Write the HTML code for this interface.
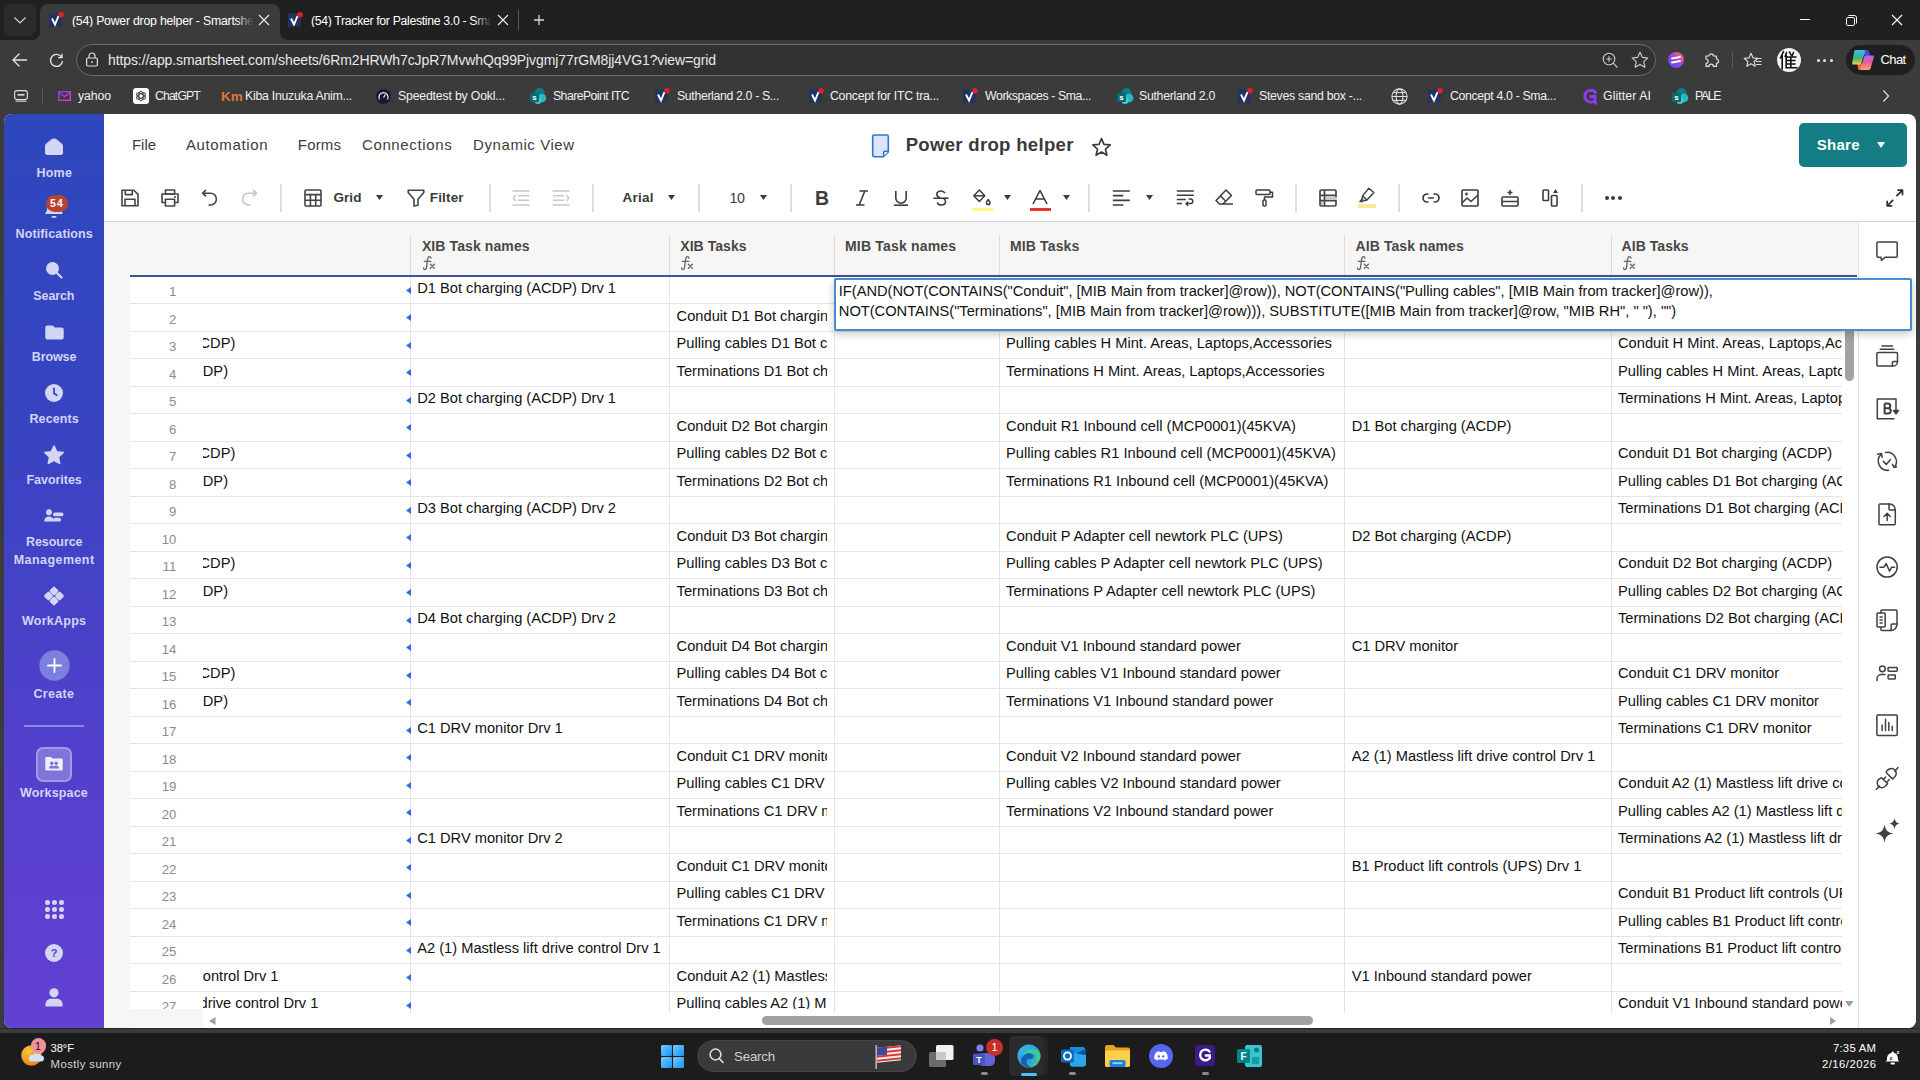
<!DOCTYPE html>
<html><head><meta charset="utf-8"><style>*{box-sizing:border-box;margin:0;padding:0}
html,body{width:1920px;height:1080px;overflow:hidden;background:#3b3b3b;font-family:"Liberation Sans",sans-serif;position:relative}
.a{position:absolute}
.t{position:absolute;line-height:1;white-space:pre}
svg.a{overflow:visible}
</style></head><body>
<div class="a" style="left:0px;top:0px;width:1920px;height:40px;background:#202020"></div>
<div class="a" style="left:4px;top:4px;width:32px;height:32px;background:#2b2b2b;border-radius:8px"></div>
<svg class="a" style="left:12px;top:12px;" width="16" height="16" viewBox="0 0 16 16"><polyline points="2.5,5.5 8,11 13.5,5.5" fill="none" stroke="#d6d6d6" stroke-width="1.2"/></svg>
<div class="a" style="left:40px;top:4px;width:240px;height:37px;background:#3b3b3b;border-radius:8px 8px 0 0"></div>
<svg class="a" style="left:32px;top:32px;" width="8" height="8" viewBox="0 0 8 8"><path d="M8 0V8H0A8 8 0 0 0 8 0Z" fill="#3b3b3b"/></svg>
<svg class="a" style="left:280px;top:32px;" width="8" height="8" viewBox="0 0 8 8"><path d="M0 0V8H8A8 8 0 0 1 0 0Z" fill="#3b3b3b"/></svg>
<svg class="a" style="left:49px;top:12px;" width="15" height="16" viewBox="0 0 15 16"><path d="M0 1.5h11.5l1 0v13.5l-6 -1.2 -6.5 1.7z" fill="#1e3563"/><path d="M3 6.5l3 6 3.5-8.5" fill="none" stroke="#fff" stroke-width="1.9"/><circle cx="12" cy="2.8" r="2.8" fill="#e0202a"/></svg>
<div class="t" style="left:72.00px;top:14.89px;font-size:12.3px;color:#fff;letter-spacing:-0.231px;width:184px;overflow:hidden;">(54) Power drop helper - Smartsheet</div>
<div class="a" style="left:236px;top:8px;width:22px;height:28px;background:linear-gradient(90deg,rgba(59,59,59,0),#3b3b3b 80%)"></div>
<svg class="a" style="left:259.0px;top:15.0px;" width="10" height="10" viewBox="0 0 10 10"><path d="M0 0L10 10M10 0L0 10" stroke="#e8e8e8" stroke-width="1.2"/></svg>
<svg class="a" style="left:288px;top:12px;" width="15" height="16" viewBox="0 0 15 16"><path d="M0 1.5h11.5l1 0v13.5l-6 -1.2 -6.5 1.7z" fill="#1e3563"/><path d="M3 6.5l3 6 3.5-8.5" fill="none" stroke="#fff" stroke-width="1.9"/><circle cx="12" cy="2.8" r="2.8" fill="#e0202a"/></svg>
<div class="t" style="left:311.00px;top:14.89px;font-size:12.3px;color:#fff;letter-spacing:-0.339px;width:184px;overflow:hidden;">(54) Tracker for Palestine 3.0 - Smartsheet</div>
<div class="a" style="left:474px;top:8px;width:22px;height:28px;background:linear-gradient(90deg,rgba(32,32,32,0),#202020 80%)"></div>
<svg class="a" style="left:498.0px;top:15.0px;" width="10" height="10" viewBox="0 0 10 10"><path d="M0 0L10 10M10 0L0 10" stroke="#e8e8e8" stroke-width="1.2"/></svg>
<div class="a" style="left:518px;top:10px;width:1px;height:20px;background:#585858"></div>
<svg class="a" style="left:534px;top:15px;" width="10" height="10" viewBox="0 0 10 10"><path d="M5 0V10M0 5H10" stroke="#d8d8d8" stroke-width="1.3"/></svg>
<div class="a" style="left:1800px;top:19px;width:10px;height:1px;background:#fff"></div>
<svg class="a" style="left:1846px;top:15px;" width="11" height="11" viewBox="0 0 11 11"><rect x="0.5" y="2.5" width="8" height="8" rx="1.3" fill="none" stroke="#fff" stroke-width="1"/><path d="M2.5 0.5h6a2 2 0 0 1 2 2v6" fill="none" stroke="#fff" stroke-width="1"/></svg>
<svg class="a" style="left:1892.0px;top:15.0px;" width="10" height="10" viewBox="0 0 10 10"><path d="M0 0L10 10M10 0L0 10" stroke="#fff" stroke-width="1.1"/></svg>
<svg class="a" style="left:12px;top:52px;" width="16" height="16" viewBox="0 0 16 16"><path d="M15 8H1.5M7.5 1.5L1 8l6.5 6.5" fill="none" stroke="#e6e6e6" stroke-width="1.3"/></svg>
<svg class="a" style="left:49px;top:53px;" width="15" height="15" viewBox="0 0 15 15"><path d="M12.6 4.2A6 6 0 1 0 13.5 8" fill="none" stroke="#e6e6e6" stroke-width="1.3"/><path d="M13 0.8v3.8H9.2" fill="none" stroke="#e6e6e6" stroke-width="1.3"/></svg>
<div class="a" style="left:76px;top:44px;width:1580px;height:32px;background:#323232;border:1px solid #6a6a6a;border-radius:16px"></div>
<svg class="a" style="left:86px;top:52px;" width="12" height="15" viewBox="0 0 12 15"><path d="M3 6V4a3 3 0 0 1 6 0v2" fill="none" stroke="#e0e0e0" stroke-width="1.2"/><rect x="0.6" y="6" width="10.8" height="8" rx="1.5" fill="none" stroke="#e0e0e0" stroke-width="1.2"/><rect x="5.2" y="9.3" width="1.6" height="1.6" fill="#e0e0e0"/></svg>
<div class="t" style="left:108.00px;top:53.05px;font-size:14px;color:#e8e8e8;letter-spacing:-0.100px;">https://app.smartsheet.com/sheets/6Rm2HRWh7cJpR7MvwhQq99Pjvgmj77rGM8jj4VG1?view=grid</div>
<svg class="a" style="left:1602px;top:52px;" width="17" height="17" viewBox="0 0 17 17"><circle cx="7" cy="7" r="5.8" fill="none" stroke="#cfcfcf" stroke-width="1.1"/><path d="M11.2 11.2L15.5 15.5M7 4.2v5.6M4.2 7h5.6" stroke="#cfcfcf" stroke-width="1.1"/></svg>
<svg class="a" style="left:1630px;top:50px;" width="20" height="20" viewBox="0 0 20 20"><polygon points="10.00,2.20 12.29,7.34 17.89,7.94 13.71,11.71 14.88,17.21 10.00,14.40 5.12,17.21 6.29,11.71 2.11,7.94 7.71,7.34" fill="none" stroke="#cfcfcf" stroke-width="1.1" stroke-linejoin="round"/></svg>
<svg class="a" style="left:1668px;top:52px;" width="16" height="16" viewBox="0 0 16 16"><defs><linearGradient id="eg" x1="1" y1="0" x2="0" y2="1"><stop offset="0" stop-color="#ff7a52"/><stop offset="0.5" stop-color="#a040e0"/><stop offset="1" stop-color="#3a5cf0"/></linearGradient></defs><circle cx="8" cy="8" r="8" fill="url(#eg)"/><path d="M4 6.5l8-1.5M4 10.5l8-1.5" stroke="#fff" stroke-width="1.8" stroke-linecap="round"/></svg>
<svg class="a" style="left:1703px;top:51px;" width="18" height="18" viewBox="0 0 18 18"><path d="M3 5h3a2.2 2.2 0 1 1 4.4 0h3v3a2.2 2.2 0 1 1 0 4.4v3h-3a2.2 2.2 0 1 0 -4.4 0H3v-3a2.2 2.2 0 1 0 0 -4.4z" fill="none" stroke="#e0e0e0" stroke-width="1.2" stroke-linejoin="round"/></svg>
<div class="a" style="left:1732px;top:52px;width:1px;height:16px;background:#5a5a5a"></div>
<svg class="a" style="left:1743px;top:51px;" width="20" height="18" viewBox="0 0 20 18"><polygon points="8.00,2.30 9.94,6.83 14.85,7.28 11.14,10.52 12.23,15.32 8.00,12.80 3.77,15.32 4.86,10.52 1.15,7.28 6.06,6.83" fill="none" stroke="#e0e0e0" stroke-width="1.1" stroke-linejoin="round"/><path d="M13 7.5h5.5M13 10.5h5.5M13 13.5h5.5" stroke="#e0e0e0" stroke-width="1.1"/></svg>
<svg class="a" style="left:1777px;top:48px;" width="24" height="24" viewBox="0 0 24 24"><circle cx="12" cy="12" r="12" fill="#f4f4f4"/><g fill="none" stroke="#111" stroke-width="1.6" stroke-linecap="round"><path d="M6.5 3.5L3.5 10M5.2 7.5V21"/><path d="M9.5 4.5L8.2 8.5M9.2 7.5V20M9.2 9H19M9.2 12.5H18M9.2 16H18M9.2 19.8H20M13.8 9V19.8M12.5 4L14 7M16.5 4.5L15.2 7.5"/></g></svg>
<div class="a" style="left:1816.5px;top:58.5px;width:3px;height:3px;background:#e6e6e6;border-radius:50%"></div>
<div class="a" style="left:1823.0px;top:58.5px;width:3px;height:3px;background:#e6e6e6;border-radius:50%"></div>
<div class="a" style="left:1829.5px;top:58.5px;width:3px;height:3px;background:#e6e6e6;border-radius:50%"></div>
<div class="a" style="left:1846px;top:45px;width:69px;height:30px;background:#1f1f1f;border-radius:15px"></div>
<svg class="a" style="left:1852px;top:50px;" width="22" height="20" viewBox="0 0 22 20"><defs><linearGradient id="cg1" x1="0" y1="0" x2="0" y2="1"><stop offset="0" stop-color="#35c1f1"/><stop offset="0.55" stop-color="#3fb079"/><stop offset="1" stop-color="#f2d43a"/></linearGradient><linearGradient id="cg2" x1="0" y1="0" x2="0" y2="1"><stop offset="0" stop-color="#b95ff2"/><stop offset="0.5" stop-color="#ee5c96"/><stop offset="1" stop-color="#fca66a"/></linearGradient></defs><path d="M11 0H15C16 0 16.7 .6 17 1.5L18.2 5.8H12.5Z" fill="#3a4fdc"/><path d="M5.5 13.5H10L11.2 20H7.5C6.7 20 6 19.3 5.8 18.5Z" fill="#ef6a3a"/><path d="M4 0H12C13 0 13.4 .8 13.1 1.8L9.4 13C9.1 13.9 8.4 14.5 7.5 14.5H1.2C.4 14.5 -.1 13.7 .2 12.9L2.2 1.6C2.5 .6 3 0 4 0Z" fill="url(#cg1)"/><path d="M14.2 5.6H20.8C21.7 5.6 22.1 6.3 21.9 7.1L18.6 18.3C18.3 19.3 17.6 20 16.6 20H9.6C8.8 20 8.4 19.2 8.6 18.4L12 7.2C12.3 6.2 13 5.6 14.2 5.6Z" fill="url(#cg2)"/></svg>
<div class="t" style="left:1880.50px;top:53.20px;font-size:13px;color:#fff;letter-spacing:-0.617px;">Chat</div>
<svg class="a" style="left:14px;top:90px;" width="14" height="12" viewBox="0 0 14 12"><rect x="0.6" y="0.6" width="12.8" height="9" rx="2.5" fill="none" stroke="#e0e0e0" stroke-width="1.1"/><path d="M3.5 4.8h7" stroke="#e0e0e0" stroke-width="1.6"/><path d="M1.5 11.2h11" stroke="#e0e0e0" stroke-width="1"/></svg>
<div class="a" style="left:42px;top:88px;width:1px;height:16px;background:#5a5a5a"></div>
<svg class="a" style="left:58px;top:91px;" width="13" height="10" viewBox="0 0 13 10"><defs><linearGradient id="mg" x1="0" y1="0" x2="1" y2="1"><stop offset="0" stop-color="#6a4bff"/><stop offset="1" stop-color="#ff2ad0"/></linearGradient></defs><rect x="0.7" y="0.7" width="11.6" height="8.6" fill="none" stroke="url(#mg)" stroke-width="1.4"/><path d="M0.7 1.5L6.5 5.5L12.3 1.5" fill="none" stroke="url(#mg)" stroke-width="1.4"/></svg>
<div class="t" style="left:78.00px;top:90.29px;font-size:12.3px;color:#f0f0f0;letter-spacing:-0.103px;">yahoo</div>
<div class="a" style="left:133px;top:88px;width:16px;height:16px;background:#fff;border-radius:3px"></div>
<svg class="a" style="left:135px;top:90px;" width="12" height="12" viewBox="0 0 12 12"><ellipse cx="6" cy="6" rx="2.2" ry="4.8" transform="rotate(0 6 6)" fill="none" stroke="#3a3a3a" stroke-width="1"/><ellipse cx="6" cy="6" rx="2.2" ry="4.8" transform="rotate(60 6 6)" fill="none" stroke="#3a3a3a" stroke-width="1"/><ellipse cx="6" cy="6" rx="2.2" ry="4.8" transform="rotate(120 6 6)" fill="none" stroke="#3a3a3a" stroke-width="1"/></svg>
<div class="t" style="left:155.00px;top:90.29px;font-size:12.3px;color:#f0f0f0;letter-spacing:-0.895px;">ChatGPT</div>
<div class="t" style="left:221.00px;top:90.27px;font-size:13.5px;color:#e2733a;font-weight:700;font-family:"Liberation Serif",serif;font-style:italic;letter-spacing:-2px;">Km</div>
<div class="t" style="left:245.00px;top:90.29px;font-size:12.3px;color:#f0f0f0;letter-spacing:-0.255px;">Kiba Inuzuka Anim...</div>
<svg class="a" style="left:376px;top:89px;" width="15" height="15" viewBox="0 0 15 15"><circle cx="7.5" cy="7.5" r="7.5" fill="#141a2e"/><path d="M3.5 10.5A4.6 4.6 0 1 1 11.5 10.5" fill="none" stroke="#e8e8e8" stroke-width="1.2"/><path d="M7.5 8.5L9.5 5.5" stroke="#e8e8e8" stroke-width="1.3"/></svg>
<div class="t" style="left:398.00px;top:90.29px;font-size:12.3px;color:#f0f0f0;letter-spacing:-0.187px;">Speedtest by Ookl...</div>
<svg class="a" style="left:530px;top:88px;" width="17" height="16" viewBox="0 0 17 16"><circle cx="9.5" cy="5" r="5" fill="#0e7c86"/><circle cx="12" cy="10" r="4.3" fill="#2ab7c4"/><circle cx="8" cy="12.5" r="3.5" fill="#43c9d2"/><rect x="0" y="5" width="9" height="9" rx="1.2" fill="#036c70"/><text x="4.5" y="12.3" text-anchor="middle" font-family="Liberation Sans" font-weight="700" font-size="8" fill="#fff">s</text></svg>
<div class="t" style="left:553.00px;top:90.29px;font-size:12.3px;color:#f0f0f0;letter-spacing:-0.577px;">SharePoint ITC</div>
<svg class="a" style="left:655px;top:88px;" width="15" height="16" viewBox="0 0 15 16"><path d="M0 1.5h11.5l1 0v13.5l-6 -1.2 -6.5 1.7z" fill="#1e3563"/><path d="M3 6.5l3 6 3.5-8.5" fill="none" stroke="#fff" stroke-width="1.9"/><circle cx="12" cy="2.8" r="2.8" fill="#e0202a"/></svg>
<div class="t" style="left:677.00px;top:90.29px;font-size:12.3px;color:#f0f0f0;letter-spacing:-0.351px;">Sutherland 2.0 - S...</div>
<svg class="a" style="left:809px;top:88px;" width="15" height="16" viewBox="0 0 15 16"><path d="M0 1.5h11.5l1 0v13.5l-6 -1.2 -6.5 1.7z" fill="#1e3563"/><path d="M3 6.5l3 6 3.5-8.5" fill="none" stroke="#fff" stroke-width="1.9"/><circle cx="12" cy="2.8" r="2.8" fill="#e0202a"/></svg>
<div class="t" style="left:830.00px;top:90.29px;font-size:12.3px;color:#f0f0f0;letter-spacing:-0.264px;">Concept for ITC tra...</div>
<svg class="a" style="left:963px;top:88px;" width="15" height="16" viewBox="0 0 15 16"><path d="M0 1.5h11.5l1 0v13.5l-6 -1.2 -6.5 1.7z" fill="#1e3563"/><path d="M3 6.5l3 6 3.5-8.5" fill="none" stroke="#fff" stroke-width="1.9"/><circle cx="12" cy="2.8" r="2.8" fill="#e0202a"/></svg>
<div class="t" style="left:985.00px;top:90.29px;font-size:12.3px;color:#f0f0f0;letter-spacing:-0.415px;">Workspaces - Sma...</div>
<svg class="a" style="left:1117px;top:88px;" width="17" height="16" viewBox="0 0 17 16"><circle cx="9.5" cy="5" r="5" fill="#0e7c86"/><circle cx="12" cy="10" r="4.3" fill="#2ab7c4"/><circle cx="8" cy="12.5" r="3.5" fill="#43c9d2"/><rect x="0" y="5" width="9" height="9" rx="1.2" fill="#036c70"/><text x="4.5" y="12.3" text-anchor="middle" font-family="Liberation Sans" font-weight="700" font-size="8" fill="#fff">s</text></svg>
<div class="t" style="left:1139.00px;top:90.29px;font-size:12.3px;color:#f0f0f0;letter-spacing:-0.286px;">Sutherland 2.0</div>
<svg class="a" style="left:1238px;top:88px;" width="15" height="16" viewBox="0 0 15 16"><path d="M0 1.5h11.5l1 0v13.5l-6 -1.2 -6.5 1.7z" fill="#1e3563"/><path d="M3 6.5l3 6 3.5-8.5" fill="none" stroke="#fff" stroke-width="1.9"/><circle cx="12" cy="2.8" r="2.8" fill="#e0202a"/></svg>
<div class="t" style="left:1259.00px;top:90.29px;font-size:12.3px;color:#f0f0f0;letter-spacing:-0.284px;">Steves sand box -...</div>
<svg class="a" style="left:1391px;top:88px;" width="17" height="17" viewBox="0 0 17 17"><circle cx="8.5" cy="8.5" r="7.6" fill="none" stroke="#e0e0e0" stroke-width="1.1"/><ellipse cx="8.5" cy="8.5" rx="3.4" ry="7.6" fill="none" stroke="#e0e0e0" stroke-width="1.1"/><path d="M1 8.5h15M2.2 4.6h12.6M2.2 12.4h12.6" stroke="#e0e0e0" stroke-width="1"/></svg>
<svg class="a" style="left:1428px;top:88px;" width="15" height="16" viewBox="0 0 15 16"><path d="M0 1.5h11.5l1 0v13.5l-6 -1.2 -6.5 1.7z" fill="#1e3563"/><path d="M3 6.5l3 6 3.5-8.5" fill="none" stroke="#fff" stroke-width="1.9"/><circle cx="12" cy="2.8" r="2.8" fill="#e0202a"/></svg>
<div class="t" style="left:1450.00px;top:90.29px;font-size:12.3px;color:#f0f0f0;letter-spacing:-0.339px;">Concept 4.0 - Sma...</div>
<svg class="a" style="left:1582px;top:88px;" width="16" height="17" viewBox="0 0 16 17"><path d="M13.5 4.5A6 6 0 1 0 13 12.5L13 8.5H8.5" fill="none" stroke="#8e3bf0" stroke-width="3" stroke-linecap="round"/><circle cx="13.5" cy="15" r="1.8" fill="#8e3bf0"/></svg>
<div class="t" style="left:1603.00px;top:90.29px;font-size:12.3px;color:#f0f0f0;letter-spacing:0.084px;">Glitter AI</div>
<svg class="a" style="left:1672px;top:88px;" width="17" height="16" viewBox="0 0 17 16"><circle cx="9.5" cy="5" r="5" fill="#0e7c86"/><circle cx="12" cy="10" r="4.3" fill="#2ab7c4"/><circle cx="8" cy="12.5" r="3.5" fill="#43c9d2"/><rect x="0" y="5" width="9" height="9" rx="1.2" fill="#036c70"/><text x="4.5" y="12.3" text-anchor="middle" font-family="Liberation Sans" font-weight="700" font-size="8" fill="#fff">s</text></svg>
<div class="t" style="left:1695.00px;top:90.29px;font-size:12.3px;color:#f0f0f0;letter-spacing:-1.387px;">PALE</div>
<svg class="a" style="left:1882px;top:90px;" width="8" height="12" viewBox="0 0 8 12"><path d="M1.5 0.5L6.5 6L1.5 11.5" fill="none" stroke="#e0e0e0" stroke-width="1.2"/></svg>
<div class="a" style="left:4px;top:114px;width:1912px;height:914px;background:#fff;border-radius:8px"></div>
<div class="a" style="left:4px;top:114px;width:100px;height:914px;background:linear-gradient(180deg,#2e47bd 0%,#3844c2 35%,#4a41c9 58%,#5a40cf 82%,#6240d2 100%);border-radius:8px 0 0 8px"></div>
<svg class="a" style="left:44px;top:137px;" width="20" height="19" viewBox="0 0 20 19"><path d="M7.2 2.6C8.2 1.9 9 1.6 10 1.6S11.8 1.9 12.8 2.6L18 6.8C18.7 7.4 19 8.2 19 9.2V15.6C19 17.2 18.2 18 16.6 18H3.4C1.8 18 1 17.2 1 15.6V9.2C1 8.2 1.3 7.4 2 6.8Z" fill="#d3d5f5"/></svg>
<div class="t" style="left:36.40px;top:167.42px;font-size:12.5px;color:#d2d4f4;font-weight:700;letter-spacing:0.241px;">Home</div>
<svg class="a" style="left:45px;top:198px;" width="18" height="21" viewBox="0 0 18 21"><path d="M2 12.5c0-5 3-8.5 7-8.5s7 3.5 7 8.5l1.5 2.2c.4.6 0 1.3-.7 1.3H1.2c-.7 0-1.1-.7-.7-1.3z" fill="#d3d5f5"/><rect x="6.5" y="18" width="5" height="1.8" rx=".9" fill="#d3d5f5"/></svg>
<div class="a" style="left:46px;top:195px;width:22px;height:16.5px;background:#b9432e;border-radius:9px"></div>
<div class="t" style="left:50.00px;top:198.31px;font-size:10.5px;color:#fff;font-weight:700;letter-spacing:1.156px;">54</div>
<div class="t" style="left:15.50px;top:228.12px;font-size:12.5px;color:#d2d4f4;font-weight:700;letter-spacing:0.131px;">Notifications</div>
<svg class="a" style="left:45px;top:261px;" width="18" height="18" viewBox="0 0 18 18"><circle cx="7.5" cy="7.5" r="6.5" fill="#d3d5f5"/><path d="M12 12l4.5 4.5" stroke="#d3d5f5" stroke-width="2.2" stroke-linecap="round"/></svg>
<div class="t" style="left:33.30px;top:290.02px;font-size:12.5px;color:#d2d4f4;font-weight:700;letter-spacing:-0.101px;">Search</div>
<svg class="a" style="left:44.5px;top:324.5px;" width="19" height="15" viewBox="0 0 19 15"><path d="M2.5 0.5h4.5c.8 0 1.3.3 1.8.9l1 1.1h6.7c1.4 0 2.2.8 2.2 2.2v7.6c0 1.4-.8 2.2-2.2 2.2H2.5C1.1 14.5.3 13.7.3 12.3V2.7C.3 1.3 1.1.5 2.5.5z" fill="#d3d5f5"/></svg>
<div class="t" style="left:31.75px;top:350.92px;font-size:12.5px;color:#d2d4f4;font-weight:700;letter-spacing:-0.109px;">Browse</div>
<svg class="a" style="left:45px;top:383.5px;" width="18" height="18" viewBox="0 0 18 18"><circle cx="9" cy="9" r="9" fill="#d3d5f5"/><path d="M9 4.5V9.3L11.8 11.2" fill="none" stroke="#3a42c4" stroke-width="1.8" stroke-linecap="round"/></svg>
<div class="t" style="left:29.50px;top:413.42px;font-size:12.5px;color:#d2d4f4;font-weight:700;letter-spacing:0.087px;">Recents</div>
<svg class="a" style="left:44px;top:445px;" width="20" height="20" viewBox="0 0 20 20"><polygon points="10.00,1.00 12.70,6.88 19.13,7.63 14.37,12.02 15.64,18.37 10.00,15.20 4.36,18.37 5.63,12.02 0.87,7.63 7.30,6.88" fill="#d3d5f5" stroke="#d3d5f5" stroke-width="1.6" stroke-linejoin="round"/></svg>
<div class="t" style="left:26.50px;top:474.17px;font-size:12.5px;color:#d2d4f4;font-weight:700;letter-spacing:-0.038px;">Favorites</div>
<svg class="a" style="left:44px;top:509px;" width="20" height="14" viewBox="0 0 20 14"><circle cx="5" cy="3.2" r="3" fill="#d3d5f5"/><path d="M0.2 12.5c0-3.2 2-5 4.8-5s4.8 1.8 4.8 5z" fill="#d3d5f5"/><rect x="9" y="3.5" width="10.5" height="3.8" rx="1.9" fill="#d3d5f5"/><rect x="9" y="8.8" width="8" height="3.8" rx="1.9" fill="#d3d5f5"/></svg>
<div class="t" style="left:26.00px;top:536.42px;font-size:12.5px;color:#d2d4f4;font-weight:700;letter-spacing:-0.061px;">Resource</div>
<div class="t" style="left:13.75px;top:554.22px;font-size:12.5px;color:#d2d4f4;font-weight:700;letter-spacing:0.434px;">Management</div>
<svg class="a" style="left:44px;top:587px;" width="20" height="18" viewBox="0 0 20 18"><g fill="#d3d5f5"><rect x="6.5" y="0.5" width="7" height="7" rx="1.6" transform="rotate(45 10 4)"/><rect x="1" y="5.5" width="7" height="7" rx="1.6" transform="rotate(45 4.5 9)"/><rect x="12" y="5.5" width="7" height="7" rx="1.6" transform="rotate(45 15.5 9)"/><rect x="6.5" y="10.5" width="7" height="7" rx="1.6" transform="rotate(45 10 14)"/></g></svg>
<div class="t" style="left:22.00px;top:614.92px;font-size:12.5px;color:#d2d4f4;font-weight:700;letter-spacing:0.246px;">WorkApps</div>
<svg class="a" style="left:38.5px;top:650px;" width="31" height="31" viewBox="0 0 31 31"><circle cx="15.5" cy="15.5" r="15.2" fill="#7d7fdc"/><path d="M15.5 9v13M9 15.5h13" stroke="#fff" stroke-width="1.8" stroke-linecap="round"/></svg>
<div class="t" style="left:33.40px;top:688.22px;font-size:12.5px;color:#d2d4f4;font-weight:700;letter-spacing:0.346px;">Create</div>
<div class="a" style="left:24px;top:725px;width:60px;height:2px;background:#8b89df"></div>
<div class="a" style="left:36px;top:746.5px;width:36px;height:35px;background:#7e74da;border:2px solid #a39ae6;border-radius:7px"></div>
<svg class="a" style="left:45px;top:756px;" width="18" height="15" viewBox="0 0 18 15"><path d="M1.5 1h4.5l1.5 1.5h9c.8 0 1.2.4 1.2 1.2v9.6c0 .8-.4 1.2-1.2 1.2H1.5c-.8 0-1.2-.4-1.2-1.2V2.2C.3 1.4.7 1 1.5 1z" fill="#eeeefc"/><circle cx="6.8" cy="7.3" r="1.7" fill="#7e74da"/><circle cx="11.2" cy="7.3" r="1.7" fill="#7e74da"/><path d="M4 12.5c0-2 1.3-3 2.8-3s2.8 1 2.8 3zM8.4 12.5c0-2 1.3-3 2.8-3s2.8 1 2.8 3z" fill="#7e74da"/></svg>
<div class="t" style="left:19.90px;top:786.72px;font-size:12.5px;color:#d2d4f4;font-weight:700;letter-spacing:0.181px;">Workspace</div>
<div class="a" style="left:45px;top:900px;width:4.6px;height:4.6px;background:#d3d5f5;border-radius:50%"></div>
<div class="a" style="left:52px;top:900px;width:4.6px;height:4.6px;background:#d3d5f5;border-radius:50%"></div>
<div class="a" style="left:59px;top:900px;width:4.6px;height:4.6px;background:#d3d5f5;border-radius:50%"></div>
<div class="a" style="left:45px;top:907px;width:4.6px;height:4.6px;background:#d3d5f5;border-radius:50%"></div>
<div class="a" style="left:52px;top:907px;width:4.6px;height:4.6px;background:#d3d5f5;border-radius:50%"></div>
<div class="a" style="left:59px;top:907px;width:4.6px;height:4.6px;background:#d3d5f5;border-radius:50%"></div>
<div class="a" style="left:45px;top:914px;width:4.6px;height:4.6px;background:#d3d5f5;border-radius:50%"></div>
<div class="a" style="left:52px;top:914px;width:4.6px;height:4.6px;background:#d3d5f5;border-radius:50%"></div>
<div class="a" style="left:59px;top:914px;width:4.6px;height:4.6px;background:#d3d5f5;border-radius:50%"></div>
<svg class="a" style="left:45px;top:944px;" width="18" height="18" viewBox="0 0 18 18"><circle cx="9" cy="9" r="9" fill="#d3d5f5"/><text x="9" y="13" text-anchor="middle" font-family="Liberation Sans" font-weight="700" font-size="11" fill="#5a3ecd">?</text></svg>
<svg class="a" style="left:45px;top:988px;" width="18" height="19" viewBox="0 0 18 19"><circle cx="9" cy="4.8" r="4.6" fill="#d3d5f5"/><path d="M0.5 18.5v-2.2c0-3.2 2.4-5.6 5.4-5.6h6.2c3 0 5.4 2.4 5.4 5.6v2.2z" fill="#d3d5f5"/></svg>
<div class="t" style="left:132.00px;top:136.90px;font-size:15px;color:#3d3d3d;letter-spacing:-0.043px;">File</div>
<div class="t" style="left:185.90px;top:136.90px;font-size:15px;color:#3d3d3d;letter-spacing:0.651px;">Automation</div>
<div class="t" style="left:297.80px;top:136.90px;font-size:15px;color:#3d3d3d;letter-spacing:0.180px;">Forms</div>
<div class="t" style="left:361.90px;top:136.90px;font-size:15px;color:#3d3d3d;letter-spacing:0.655px;">Connections</div>
<div class="t" style="left:473.10px;top:136.90px;font-size:15px;color:#3d3d3d;letter-spacing:0.570px;">Dynamic View</div>
<svg class="a" style="left:872px;top:134px;" width="19" height="24" viewBox="0 0 19 24"><path d="M2.2 1h12.6c.9 0 1.5.6 1.5 1.5v15.5l-4.8 4.8H2.2c-.9 0-1.5-.6-1.5-1.5V2.5C.7 1.6 1.3 1 2.2 1z" fill="#dbe5fb" stroke="#2f76cf" stroke-width="1.6" stroke-linejoin="round"/><path d="M16.3 17.2h-3.6c-.6 0-1 .4-1 1v4.4" fill="#fff" stroke="#2f76cf" stroke-width="1.6" stroke-linejoin="round"/></svg>
<div class="t" style="left:905.70px;top:135.96px;font-size:18.6px;color:#3a3a3a;font-weight:700;letter-spacing:0.279px;">Power drop helper</div>
<svg class="a" style="left:1091px;top:137px;" width="21" height="20" viewBox="0 0 21 20"><polygon points="10.50,1.60 12.97,7.40 19.25,7.96 14.49,12.10 15.91,18.24 10.50,15.00 5.09,18.24 6.51,12.10 1.75,7.96 8.03,7.40" fill="none" stroke="#3d3d3d" stroke-width="1.7" stroke-linejoin="round"/></svg>
<div class="a" style="left:1799px;top:123px;width:108px;height:44px;background:#137d83;border-radius:5px"></div>
<div class="t" style="left:1816.80px;top:137.30px;font-size:15px;color:#fff;font-weight:700;letter-spacing:0.259px;">Share</div>
<svg class="a" style="left:1877px;top:142px;" width="8" height="6" viewBox="0 0 8 6"><path d="M0 0H8L4 6z" fill="#fff"/></svg>
<div class="a" style="left:104px;top:221px;width:1812px;height:1px;background:#d3d3d3"></div>
<svg class="a" style="left:121px;top:189px;" width="18" height="18" viewBox="0 0 18 18"><g fill="none" stroke="#444" stroke-width="1.6" stroke-linejoin="round"><path d="M1 1.2h11.8l4.2 4.2V16.8H1z"/><path d="M4.3 1.2V5.6h7V1.2"/><path d="M4 16.8V10.3h10v6.5"/></g></svg>
<svg class="a" style="left:161px;top:189px;" width="18" height="18" viewBox="0 0 18 18"><g fill="none" stroke="#444" stroke-width="1.6" stroke-linejoin="round"><rect x="4.4" y="1" width="9.2" height="4"/><path d="M4.3 13.5H1V5h16v8.5h-3.3"/><rect x="4.4" y="10.2" width="9.2" height="6.8"/></g></svg>
<div class="a" style="left:173.5px;top:196px;width:2px;height:2px;background:#444;border-radius:1px"></div>
<svg class="a" style="left:201px;top:189px;" width="18" height="18" viewBox="0 0 18 18"><g fill="none" stroke="#444" stroke-width="1.6" stroke-linejoin="round"><path d="M1.8 4.2H9.5a5.9 5.9 0 0 1 0 11.8H7.5"/><path d="M5 1L1.6 4.2L5 7.4"/></g></svg>
<svg class="a" style="left:240px;top:189px;" width="18" height="18" viewBox="0 0 18 18"><g fill="none" stroke="#c6c6c6" stroke-width="1.6" stroke-linejoin="round"><path d="M16.2 4.2H8.5a5.9 5.9 0 0 0 0 11.8H10.5"/><path d="M13 1L16.4 4.2L13 7.4"/></g></svg>
<div class="a" style="left:280px;top:184px;width:2px;height:28px;background:#dedede"></div>
<svg class="a" style="left:304px;top:189px;" width="18" height="18" viewBox="0 0 18 18"><g fill="none" stroke="#444" stroke-width="1.6" stroke-linejoin="round"><rect x="1" y="1" width="16" height="16" rx="1"/><path d="M1 5.6H17M1 11.2H17M6.4 5.6V17M11.7 5.6V17"/></g></svg>
<div class="t" style="left:333.50px;top:190.97px;font-size:13.5px;color:#3a3a3a;font-weight:700;letter-spacing:0.059px;">Grid</div>
<svg class="a" style="left:375.5px;top:195px;" width="7" height="5" viewBox="0 0 7 5"><path d="M0 0H7L3.5 5z" fill="#3d3d3d"/></svg>
<svg class="a" style="left:407px;top:189px;" width="18" height="18" viewBox="0 0 18 18"><g fill="none" stroke="#444" stroke-width="1.6" stroke-linejoin="round"><path d="M1.2 1.2H16.8V3.5L11 10.2V16.2L7 17V10.2L1.2 3.5Z"/></g></svg>
<div class="t" style="left:429.80px;top:190.97px;font-size:13.5px;color:#3a3a3a;font-weight:700;letter-spacing:0.164px;">Filter</div>
<div class="a" style="left:489px;top:184px;width:2px;height:28px;background:#dedede"></div>
<svg class="a" style="left:512px;top:190px;" width="18" height="16" viewBox="0 0 18 16"><g fill="none" stroke="#c8c8c8" stroke-width="1.5" stroke-linejoin="round"><path d="M0.5 1H17.5M6 5.8H17M6 10.2H17M0.5 15H17.5"/><path d="M3.8 5L1.2 8L3.8 11"/></g></svg>
<svg class="a" style="left:552px;top:190px;" width="18" height="16" viewBox="0 0 18 16"><g fill="none" stroke="#c8c8c8" stroke-width="1.5" stroke-linejoin="round"><path d="M0.5 1H17.5M1 5.8H12M1 10.2H12M0.5 15H17.5"/><path d="M14.2 5L16.8 8L14.2 11"/></g></svg>
<div class="a" style="left:592px;top:184px;width:2px;height:28px;background:#dedede"></div>
<div class="t" style="left:622.50px;top:191.27px;font-size:13.5px;color:#3a3a3a;font-weight:700;letter-spacing:0.257px;">Arial</div>
<svg class="a" style="left:667.5px;top:195px;" width="7" height="5" viewBox="0 0 7 5"><path d="M0 0H7L3.5 5z" fill="#3d3d3d"/></svg>
<div class="a" style="left:698px;top:184px;width:2px;height:28px;background:#dedede"></div>
<div class="t" style="left:729.50px;top:190.90px;font-size:14.3px;color:#3a3a3a;letter-spacing:-0.453px;">10</div>
<svg class="a" style="left:759.5px;top:195px;" width="7" height="5" viewBox="0 0 7 5"><path d="M0 0H7L3.5 5z" fill="#3d3d3d"/></svg>
<div class="a" style="left:790px;top:184px;width:2px;height:28px;background:#dedede"></div>
<div class="t" style="left:815.00px;top:188.99px;font-size:19.5px;color:#3d3d3d;font-weight:700;letter-spacing:-0.594px;">B</div>
<svg class="a" style="left:855px;top:190px;" width="14" height="16" viewBox="0 0 14 16"><path d="M4.5 1H13M1 15H9.5M9.8 1L4.2 15" fill="none" stroke="#3d3d3d" stroke-width="1.6"/></svg>
<svg class="a" style="left:893px;top:190px;" width="16" height="16" viewBox="0 0 16 16"><g fill="none" stroke="#3d3d3d" stroke-width="1.6" stroke-linejoin="round"><path d="M2.8 1V8a5.2 5.2 0 0 0 10.4 0V1"/><path d="M1 15.2H15"/></g></svg>
<svg class="a" style="left:933px;top:190px;" width="16" height="16" viewBox="0 0 16 16"><g fill="none" stroke="#3d3d3d" stroke-width="1.6" stroke-linejoin="round"><path d="M12 3.2C11.2 1.7 9.8 1 8 1 5.6 1 3.8 2.4 3.8 4.3c0 1.6 1 2.6 3.2 3.4"/><path d="M4.2 12.6C5 14.2 6.4 15 8.2 15c2.5 0 4.3-1.4 4.3-3.5 0-1.3-.6-2.3-1.8-3"/><path d="M0.5 8.2H15.5"/></g></svg>
<svg class="a" style="left:973px;top:189px;" width="18" height="16" viewBox="0 0 18 16"><g fill="none" stroke="#3d3d3d" stroke-width="1.5" stroke-linejoin="round"><path d="M6.3 1L11.8 6.8L6.3 12.5L0.8 6.8Z"/><path d="M0.8 6.8H11.8"/><path d="M15.2 10.5c1.2 1.6 1.8 2.4 1.8 3.2a1.8 1.8 0 0 1-3.6 0c0-.8.6-1.6 1.8-3.2z"/></g></svg>
<div class="a" style="left:972px;top:208px;width:21px;height:3px;background:#fbf985"></div>
<svg class="a" style="left:1004.3px;top:195px;" width="7" height="5" viewBox="0 0 7 5"><path d="M0 0H7L3.5 5z" fill="#3d3d3d"/></svg>
<svg class="a" style="left:1032px;top:189px;" width="16" height="16" viewBox="0 0 16 16"><g fill="none" stroke="#3d3d3d" stroke-width="1.6" stroke-linejoin="round"><path d="M1 15L8 1.5L15 15M3.6 10H12.4"/></g></svg>
<div class="a" style="left:1030px;top:208px;width:21px;height:3px;background:#e5392c"></div>
<svg class="a" style="left:1062.5px;top:195px;" width="7" height="5" viewBox="0 0 7 5"><path d="M0 0H7L3.5 5z" fill="#3d3d3d"/></svg>
<div class="a" style="left:1088px;top:184px;width:2px;height:28px;background:#dedede"></div>
<svg class="a" style="left:1112px;top:190px;" width="18" height="16" viewBox="0 0 18 16"><g fill="none" stroke="#3d3d3d" stroke-width="1.7" stroke-linejoin="round"><path d="M0.8 1H17.8M0.8 5.7H11.3M0.8 10.3H17.8M0.8 15H11.3"/></g></svg>
<svg class="a" style="left:1145.5px;top:195px;" width="7" height="5" viewBox="0 0 7 5"><path d="M0 0H7L3.5 5z" fill="#3d3d3d"/></svg>
<svg class="a" style="left:1176px;top:190px;" width="18" height="17" viewBox="0 0 18 17"><g fill="none" stroke="#3d3d3d" stroke-width="1.5" stroke-linejoin="round"><path d="M0.8 1H17.8M0.8 5.2H17.8M0.8 9.4H9.8M0.8 13.6H6"/><path d="M10.5 13.6H14.5a2.3 2.3 0 0 0 0-4.6H12.5"/><path d="M12.2 11.8L10 13.6L12.2 15.8"/></g></svg>
<svg class="a" style="left:1215px;top:189px;" width="19" height="17" viewBox="0 0 19 17"><g fill="none" stroke="#3d3d3d" stroke-width="1.5" stroke-linejoin="round"><path d="M11 1L16.5 6.5L8 15H4.5L1 11.5Z"/><path d="M5.2 6.8L10.7 12.3"/><path d="M8 15H18"/></g></svg>
<svg class="a" style="left:1255px;top:189px;" width="19" height="18" viewBox="0 0 19 18"><g fill="none" stroke="#3d3d3d" stroke-width="1.5" stroke-linejoin="round"><rect x="1" y="1" width="14" height="4.6" rx="1"/><path d="M15 3.3H17.5V8H9.5V11"/><rect x="8" y="11" width="3" height="6" rx="1"/></g></svg>
<div class="a" style="left:1295px;top:184px;width:2px;height:28px;background:#dedede"></div>
<svg class="a" style="left:1319px;top:189px;" width="18" height="18" viewBox="0 0 18 18"><g fill="none" stroke="#444" stroke-width="1.7" stroke-linejoin="round"><rect x="1" y="1" width="16" height="16" rx="1.2"/><path d="M1 6.3H17M1 11.7H17M5.5 1V17"/></g></svg>
<div class="a" style="left:1326px;top:196.5px;width:10.5px;height:3.8px;background:#c8c8c8"></div>
<div class="a" style="left:1320.5px;top:201.5px;width:3.5px;height:3.8px;background:#c8c8c8"></div>
<svg class="a" style="left:1359px;top:187px;" width="16" height="16" viewBox="0 0 16 16"><g fill="none" stroke="#3d3d3d" stroke-width="1.4" stroke-linejoin="round"><path d="M9.8 1.2L14.8 5.5L8 13L4.5 13.8L3 12.3L3.6 8.9Z"/><path d="M3.6 8.9L8 13"/><path d="M3 12.3L1 14.5H4"/></g></svg>
<div class="a" style="left:1358px;top:204px;width:18px;height:4px;background:#fae7a0"></div>
<div class="a" style="left:1398px;top:184px;width:2px;height:28px;background:#dedede"></div>
<svg class="a" style="left:1422px;top:193px;" width="18" height="10" viewBox="0 0 18 10"><g fill="none" stroke="#3d3d3d" stroke-width="1.7" stroke-linejoin="round"><path d="M6.5 1H5a4 4 0 0 0 0 8h1.5M11.5 1H13a4 4 0 0 1 0 8h-1.5M6 5H12"/></g></svg>
<svg class="a" style="left:1461px;top:189px;" width="18" height="18" viewBox="0 0 18 18"><g fill="none" stroke="#3d3d3d" stroke-width="1.6" stroke-linejoin="round"><rect x="1" y="1" width="16" height="16" rx="1"/><path d="M1 14L6 9L10 12.5L17 6"/><circle cx="5.5" cy="5" r=".6"/></g></svg>
<svg class="a" style="left:1501px;top:189px;" width="18" height="18" viewBox="0 0 18 18"><g fill="none" stroke="#3d3d3d" stroke-width="1.6" stroke-linejoin="round"><rect x="1" y="8" width="16" height="9" rx="1"/><path d="M1 12.5H17M9 1V6M6.5 3.5H11.5"/></g></svg>
<svg class="a" style="left:1542px;top:189px;" width="16" height="18" viewBox="0 0 16 18"><g fill="none" stroke="#3d3d3d" stroke-width="1.6" stroke-linejoin="round"><rect x="1" y="1" width="5.5" height="10.5" rx=".8"/><rect x="9.5" y="6.5" width="5.5" height="10.5" rx=".8"/></g></svg>
<svg class="a" style="left:1553px;top:189px;" width="5" height="4" viewBox="0 0 5 4"><path d="M0 4H5L2.5 0z" fill="#3d3d3d"/></svg>
<div class="a" style="left:1580.5px;top:184px;width:2px;height:28px;background:#dedede"></div>
<div class="a" style="left:1604.5px;top:196px;width:4px;height:4px;background:#3d3d3d;border-radius:50%"></div>
<div class="a" style="left:1611.3px;top:196px;width:4px;height:4px;background:#3d3d3d;border-radius:50%"></div>
<div class="a" style="left:1618px;top:196px;width:4px;height:4px;background:#3d3d3d;border-radius:50%"></div>
<svg class="a" style="left:1886px;top:189px;" width="18" height="18" viewBox="0 0 18 18"><g fill="none" stroke="#2d2d2d" stroke-width="1.7" stroke-linejoin="round"><path d="M10.5 7.2L16.5 1.2M11.5 1.2H16.5V6.2M7.2 10.8L1.2 16.8M1.2 11.8V16.8H6.2"/></g></svg>
<div class="a" style="left:104px;top:222px;width:1754px;height:806px;background:#f7f6f4"></div>
<div class="a" style="left:130px;top:277px;width:1728px;height:751px;background:#fff"></div>
<div class="a" style="left:130px;top:1009px;width:73px;height:18px;background:#f7f6f4"></div>
<div class="a" style="left:1858px;top:222px;width:58px;height:806px;background:#fff;border-left:1px solid #e2e2e2;border-radius:0 0 8px 0"></div>
<div class="a" style="left:410px;top:235px;width:1px;height:40px;background:#dedede"></div>
<div class="a" style="left:669px;top:235px;width:1px;height:40px;background:#dedede"></div>
<div class="a" style="left:834px;top:235px;width:1px;height:40px;background:#dedede"></div>
<div class="a" style="left:999px;top:235px;width:1px;height:40px;background:#dedede"></div>
<div class="a" style="left:1344px;top:235px;width:1px;height:40px;background:#dedede"></div>
<div class="a" style="left:1611px;top:235px;width:1px;height:40px;background:#dedede"></div>
<div class="t" style="left:421.90px;top:239.35px;font-size:14px;color:#474747;font-weight:700;letter-spacing:0.103px;">XIB Task names</div>
<svg class="a" style="left:418.0px;top:252px;" width="24" height="22" viewBox="0 0 24 22"><g fill="none" stroke="#676767" stroke-width="1.35" stroke-linecap="round"><path d="M13 6.2C12.6 4.6 11.2 4.2 10.3 5.2 9.8 5.8 9.6 7 9.4 8.5L8.6 15C8.4 16.8 7.6 17.6 6.8 17.6 6.1 17.6 5.6 16.8 5.6 16"/><path d="M6.3 9.4H12.9"/><path d="M12.4 12.3L16.3 16.3M16.4 12.3L12.3 16.3"/></g></svg>
<div class="t" style="left:680.30px;top:239.35px;font-size:14px;color:#474747;font-weight:700;letter-spacing:0.045px;">XIB Tasks</div>
<svg class="a" style="left:676.4px;top:252px;" width="24" height="22" viewBox="0 0 24 22"><g fill="none" stroke="#676767" stroke-width="1.35" stroke-linecap="round"><path d="M13 6.2C12.6 4.6 11.2 4.2 10.3 5.2 9.8 5.8 9.6 7 9.4 8.5L8.6 15C8.4 16.8 7.6 17.6 6.8 17.6 6.1 17.6 5.6 16.8 5.6 16"/><path d="M6.3 9.4H12.9"/><path d="M12.4 12.3L16.3 16.3M16.4 12.3L12.3 16.3"/></g></svg>
<div class="t" style="left:845.00px;top:239.35px;font-size:14px;color:#474747;font-weight:700;letter-spacing:0.188px;">MIB Task names</div>
<div class="t" style="left:1010.00px;top:239.35px;font-size:14px;color:#474747;font-weight:700;letter-spacing:0.131px;">MIB Tasks</div>
<div class="t" style="left:1355.60px;top:239.35px;font-size:14px;color:#474747;font-weight:700;letter-spacing:0.077px;">AIB Task names</div>
<svg class="a" style="left:1351.7px;top:252px;" width="24" height="22" viewBox="0 0 24 22"><g fill="none" stroke="#676767" stroke-width="1.35" stroke-linecap="round"><path d="M13 6.2C12.6 4.6 11.2 4.2 10.3 5.2 9.8 5.8 9.6 7 9.4 8.5L8.6 15C8.4 16.8 7.6 17.6 6.8 17.6 6.1 17.6 5.6 16.8 5.6 16"/><path d="M6.3 9.4H12.9"/><path d="M12.4 12.3L16.3 16.3M16.4 12.3L12.3 16.3"/></g></svg>
<div class="t" style="left:1621.60px;top:239.35px;font-size:14px;color:#474747;font-weight:700;letter-spacing:0.048px;">AIB Tasks</div>
<svg class="a" style="left:1617.7px;top:252px;" width="24" height="22" viewBox="0 0 24 22"><g fill="none" stroke="#676767" stroke-width="1.35" stroke-linecap="round"><path d="M13 6.2C12.6 4.6 11.2 4.2 10.3 5.2 9.8 5.8 9.6 7 9.4 8.5L8.6 15C8.4 16.8 7.6 17.6 6.8 17.6 6.1 17.6 5.6 16.8 5.6 16"/><path d="M6.3 9.4H12.9"/><path d="M12.4 12.3L16.3 16.3M16.4 12.3L12.3 16.3"/></g></svg>
<div class="a" style="left:130px;top:275px;width:1727px;height:2px;background:#3e5394"></div>
<div class="a" style="left:130px;top:303px;width:1712px;height:1px;background:#e4e4e4"></div>
<div class="a" style="left:130px;top:331px;width:1712px;height:1px;background:#e4e4e4"></div>
<div class="a" style="left:130px;top:358px;width:1712px;height:1px;background:#e4e4e4"></div>
<div class="a" style="left:130px;top:386px;width:1712px;height:1px;background:#e4e4e4"></div>
<div class="a" style="left:130px;top:413px;width:1712px;height:1px;background:#e4e4e4"></div>
<div class="a" style="left:130px;top:441px;width:1712px;height:1px;background:#e4e4e4"></div>
<div class="a" style="left:130px;top:468px;width:1712px;height:1px;background:#e4e4e4"></div>
<div class="a" style="left:130px;top:496px;width:1712px;height:1px;background:#e4e4e4"></div>
<div class="a" style="left:130px;top:523px;width:1712px;height:1px;background:#e4e4e4"></div>
<div class="a" style="left:130px;top:551px;width:1712px;height:1px;background:#e4e4e4"></div>
<div class="a" style="left:130px;top:578px;width:1712px;height:1px;background:#e4e4e4"></div>
<div class="a" style="left:130px;top:606px;width:1712px;height:1px;background:#e4e4e4"></div>
<div class="a" style="left:130px;top:633px;width:1712px;height:1px;background:#e4e4e4"></div>
<div class="a" style="left:130px;top:661px;width:1712px;height:1px;background:#e4e4e4"></div>
<div class="a" style="left:130px;top:688px;width:1712px;height:1px;background:#e4e4e4"></div>
<div class="a" style="left:130px;top:716px;width:1712px;height:1px;background:#e4e4e4"></div>
<div class="a" style="left:130px;top:743px;width:1712px;height:1px;background:#e4e4e4"></div>
<div class="a" style="left:130px;top:771px;width:1712px;height:1px;background:#e4e4e4"></div>
<div class="a" style="left:130px;top:798px;width:1712px;height:1px;background:#e4e4e4"></div>
<div class="a" style="left:130px;top:826px;width:1712px;height:1px;background:#e4e4e4"></div>
<div class="a" style="left:130px;top:853px;width:1712px;height:1px;background:#e4e4e4"></div>
<div class="a" style="left:130px;top:881px;width:1712px;height:1px;background:#e4e4e4"></div>
<div class="a" style="left:130px;top:908px;width:1712px;height:1px;background:#e4e4e4"></div>
<div class="a" style="left:130px;top:936px;width:1712px;height:1px;background:#e4e4e4"></div>
<div class="a" style="left:130px;top:963px;width:1712px;height:1px;background:#e4e4e4"></div>
<div class="a" style="left:130px;top:991px;width:1712px;height:1px;background:#e4e4e4"></div>
<div class="a" style="left:410px;top:277px;width:1px;height:736px;background:#e4e4e4"></div>
<div class="a" style="left:669px;top:277px;width:1px;height:736px;background:#e4e4e4"></div>
<div class="a" style="left:834px;top:277px;width:1px;height:736px;background:#e4e4e4"></div>
<div class="a" style="left:999px;top:277px;width:1px;height:736px;background:#e4e4e4"></div>
<div class="a" style="left:1344px;top:277px;width:1px;height:736px;background:#e4e4e4"></div>
<div class="a" style="left:1611px;top:277px;width:1px;height:736px;background:#e4e4e4"></div>
<div class="a" style="left:130px;top:277px;width:73px;height:732px;overflow:hidden">
<div class="t" style="left:6.3px;top:8.03px;width:40px;text-align:right;font-size:13.2px;color:#8c8c8c">1</div>
<div class="t" style="left:6.3px;top:35.53px;width:40px;text-align:right;font-size:13.2px;color:#8c8c8c">2</div>
<div class="t" style="left:6.3px;top:63.03px;width:40px;text-align:right;font-size:13.2px;color:#8c8c8c">3</div>
<div class="t" style="left:6.3px;top:90.53px;width:40px;text-align:right;font-size:13.2px;color:#8c8c8c">4</div>
<div class="t" style="left:6.3px;top:118.03px;width:40px;text-align:right;font-size:13.2px;color:#8c8c8c">5</div>
<div class="t" style="left:6.3px;top:145.53px;width:40px;text-align:right;font-size:13.2px;color:#8c8c8c">6</div>
<div class="t" style="left:6.3px;top:173.03px;width:40px;text-align:right;font-size:13.2px;color:#8c8c8c">7</div>
<div class="t" style="left:6.3px;top:200.53px;width:40px;text-align:right;font-size:13.2px;color:#8c8c8c">8</div>
<div class="t" style="left:6.3px;top:228.03px;width:40px;text-align:right;font-size:13.2px;color:#8c8c8c">9</div>
<div class="t" style="left:6.3px;top:255.53px;width:40px;text-align:right;font-size:13.2px;color:#8c8c8c">10</div>
<div class="t" style="left:6.3px;top:283.03px;width:40px;text-align:right;font-size:13.2px;color:#8c8c8c">11</div>
<div class="t" style="left:6.3px;top:310.53px;width:40px;text-align:right;font-size:13.2px;color:#8c8c8c">12</div>
<div class="t" style="left:6.3px;top:338.03px;width:40px;text-align:right;font-size:13.2px;color:#8c8c8c">13</div>
<div class="t" style="left:6.3px;top:365.53px;width:40px;text-align:right;font-size:13.2px;color:#8c8c8c">14</div>
<div class="t" style="left:6.3px;top:393.03px;width:40px;text-align:right;font-size:13.2px;color:#8c8c8c">15</div>
<div class="t" style="left:6.3px;top:420.53px;width:40px;text-align:right;font-size:13.2px;color:#8c8c8c">16</div>
<div class="t" style="left:6.3px;top:448.03px;width:40px;text-align:right;font-size:13.2px;color:#8c8c8c">17</div>
<div class="t" style="left:6.3px;top:475.53px;width:40px;text-align:right;font-size:13.2px;color:#8c8c8c">18</div>
<div class="t" style="left:6.3px;top:503.03px;width:40px;text-align:right;font-size:13.2px;color:#8c8c8c">19</div>
<div class="t" style="left:6.3px;top:530.53px;width:40px;text-align:right;font-size:13.2px;color:#8c8c8c">20</div>
<div class="t" style="left:6.3px;top:558.03px;width:40px;text-align:right;font-size:13.2px;color:#8c8c8c">21</div>
<div class="t" style="left:6.3px;top:585.53px;width:40px;text-align:right;font-size:13.2px;color:#8c8c8c">22</div>
<div class="t" style="left:6.3px;top:613.03px;width:40px;text-align:right;font-size:13.2px;color:#8c8c8c">23</div>
<div class="t" style="left:6.3px;top:640.53px;width:40px;text-align:right;font-size:13.2px;color:#8c8c8c">24</div>
<div class="t" style="left:6.3px;top:668.03px;width:40px;text-align:right;font-size:13.2px;color:#8c8c8c">25</div>
<div class="t" style="left:6.3px;top:695.53px;width:40px;text-align:right;font-size:13.2px;color:#8c8c8c">26</div>
<div class="t" style="left:6.3px;top:723.03px;width:40px;text-align:right;font-size:13.2px;color:#8c8c8c">27</div>
</div>
<svg class="a" style="left:405.5px;top:286.7px;" width="5" height="7" viewBox="0 0 5 7"><path d="M5 0V7L0 3.5z" fill="#2e6be0"/></svg>
<svg class="a" style="left:405.5px;top:314.2px;" width="5" height="7" viewBox="0 0 5 7"><path d="M5 0V7L0 3.5z" fill="#2e6be0"/></svg>
<svg class="a" style="left:405.5px;top:341.7px;" width="5" height="7" viewBox="0 0 5 7"><path d="M5 0V7L0 3.5z" fill="#2e6be0"/></svg>
<svg class="a" style="left:405.5px;top:369.2px;" width="5" height="7" viewBox="0 0 5 7"><path d="M5 0V7L0 3.5z" fill="#2e6be0"/></svg>
<svg class="a" style="left:405.5px;top:396.7px;" width="5" height="7" viewBox="0 0 5 7"><path d="M5 0V7L0 3.5z" fill="#2e6be0"/></svg>
<svg class="a" style="left:405.5px;top:424.2px;" width="5" height="7" viewBox="0 0 5 7"><path d="M5 0V7L0 3.5z" fill="#2e6be0"/></svg>
<svg class="a" style="left:405.5px;top:451.7px;" width="5" height="7" viewBox="0 0 5 7"><path d="M5 0V7L0 3.5z" fill="#2e6be0"/></svg>
<svg class="a" style="left:405.5px;top:479.2px;" width="5" height="7" viewBox="0 0 5 7"><path d="M5 0V7L0 3.5z" fill="#2e6be0"/></svg>
<svg class="a" style="left:405.5px;top:506.7px;" width="5" height="7" viewBox="0 0 5 7"><path d="M5 0V7L0 3.5z" fill="#2e6be0"/></svg>
<svg class="a" style="left:405.5px;top:534.2px;" width="5" height="7" viewBox="0 0 5 7"><path d="M5 0V7L0 3.5z" fill="#2e6be0"/></svg>
<svg class="a" style="left:405.5px;top:561.7px;" width="5" height="7" viewBox="0 0 5 7"><path d="M5 0V7L0 3.5z" fill="#2e6be0"/></svg>
<svg class="a" style="left:405.5px;top:589.2px;" width="5" height="7" viewBox="0 0 5 7"><path d="M5 0V7L0 3.5z" fill="#2e6be0"/></svg>
<svg class="a" style="left:405.5px;top:616.7px;" width="5" height="7" viewBox="0 0 5 7"><path d="M5 0V7L0 3.5z" fill="#2e6be0"/></svg>
<svg class="a" style="left:405.5px;top:644.2px;" width="5" height="7" viewBox="0 0 5 7"><path d="M5 0V7L0 3.5z" fill="#2e6be0"/></svg>
<svg class="a" style="left:405.5px;top:671.7px;" width="5" height="7" viewBox="0 0 5 7"><path d="M5 0V7L0 3.5z" fill="#2e6be0"/></svg>
<svg class="a" style="left:405.5px;top:699.2px;" width="5" height="7" viewBox="0 0 5 7"><path d="M5 0V7L0 3.5z" fill="#2e6be0"/></svg>
<svg class="a" style="left:405.5px;top:726.7px;" width="5" height="7" viewBox="0 0 5 7"><path d="M5 0V7L0 3.5z" fill="#2e6be0"/></svg>
<svg class="a" style="left:405.5px;top:754.2px;" width="5" height="7" viewBox="0 0 5 7"><path d="M5 0V7L0 3.5z" fill="#2e6be0"/></svg>
<svg class="a" style="left:405.5px;top:781.7px;" width="5" height="7" viewBox="0 0 5 7"><path d="M5 0V7L0 3.5z" fill="#2e6be0"/></svg>
<svg class="a" style="left:405.5px;top:809.2px;" width="5" height="7" viewBox="0 0 5 7"><path d="M5 0V7L0 3.5z" fill="#2e6be0"/></svg>
<svg class="a" style="left:405.5px;top:836.7px;" width="5" height="7" viewBox="0 0 5 7"><path d="M5 0V7L0 3.5z" fill="#2e6be0"/></svg>
<svg class="a" style="left:405.5px;top:864.2px;" width="5" height="7" viewBox="0 0 5 7"><path d="M5 0V7L0 3.5z" fill="#2e6be0"/></svg>
<svg class="a" style="left:405.5px;top:891.7px;" width="5" height="7" viewBox="0 0 5 7"><path d="M5 0V7L0 3.5z" fill="#2e6be0"/></svg>
<svg class="a" style="left:405.5px;top:919.2px;" width="5" height="7" viewBox="0 0 5 7"><path d="M5 0V7L0 3.5z" fill="#2e6be0"/></svg>
<svg class="a" style="left:405.5px;top:946.7px;" width="5" height="7" viewBox="0 0 5 7"><path d="M5 0V7L0 3.5z" fill="#2e6be0"/></svg>
<svg class="a" style="left:405.5px;top:974.2px;" width="5" height="7" viewBox="0 0 5 7"><path d="M5 0V7L0 3.5z" fill="#2e6be0"/></svg>
<svg class="a" style="left:405.5px;top:1001.7px;" width="5" height="7" viewBox="0 0 5 7"><path d="M5 0V7L0 3.5z" fill="#2e6be0"/></svg>
<div class="a" style="left:203px;top:277px;width:202px;height:732px;overflow:hidden">
<div class="t" style="left:-221.80px;top:58.58px;font-size:14.67px;color:#111">Pulling cables D1 Bot charging (ACDP)</div>
<div class="t" style="left:-221.80px;top:86.58px;font-size:14.67px;color:#111">Terminations D1 Bot charging (ACDP)</div>
<div class="t" style="left:-221.80px;top:168.58px;font-size:14.67px;color:#111">Pulling cables D2 Bot charging (ACDP)</div>
<div class="t" style="left:-221.80px;top:196.58px;font-size:14.67px;color:#111">Terminations D2 Bot charging (ACDP)</div>
<div class="t" style="left:-221.80px;top:278.58px;font-size:14.67px;color:#111">Pulling cables D3 Bot charging (ACDP)</div>
<div class="t" style="left:-221.80px;top:306.58px;font-size:14.67px;color:#111">Terminations D3 Bot charging (ACDP)</div>
<div class="t" style="left:-221.80px;top:388.58px;font-size:14.67px;color:#111">Pulling cables D4 Bot charging (ACDP)</div>
<div class="t" style="left:-221.80px;top:416.58px;font-size:14.67px;color:#111">Terminations D4 Bot charging (ACDP)</div>
<div class="t" style="left:-221.80px;top:691.58px;font-size:14.67px;color:#111">Conduit A2 (1) Mastless lift drive control Drv 1</div>
<div class="t" style="left:-221.80px;top:718.58px;font-size:14.67px;color:#111">Pulling cables A2 (1) Mastless lift drive control Drv 1</div>
</div>
<div class="a" style="left:411px;top:277px;width:251px;height:732px;overflow:hidden">
<div class="t" style="left:6.20px;top:3.58px;font-size:14.67px;color:#111">D1 Bot charging (ACDP) Drv 1</div>
<div class="t" style="left:6.20px;top:113.58px;font-size:14.67px;color:#111">D2 Bot charging (ACDP) Drv 1</div>
<div class="t" style="left:6.20px;top:223.58px;font-size:14.67px;color:#111">D3 Bot charging (ACDP) Drv 2</div>
<div class="t" style="left:6.20px;top:333.58px;font-size:14.67px;color:#111">D4 Bot charging (ACDP) Drv 2</div>
<div class="t" style="left:6.20px;top:443.58px;font-size:14.67px;color:#111">C1 DRV monitor Drv 1</div>
<div class="t" style="left:6.20px;top:553.58px;font-size:14.67px;color:#111">C1 DRV monitor Drv 2</div>
<div class="t" style="left:6.20px;top:663.58px;font-size:14.67px;color:#111">A2 (1) Mastless lift drive control Drv 1</div>
</div>
<div class="a" style="left:670px;top:277px;width:157px;height:732px;overflow:hidden">
<div class="t" style="left:6.60px;top:31.58px;font-size:14.67px;color:#111">Conduit D1 Bot charging (ACDP)</div>
<div class="t" style="left:6.60px;top:58.58px;font-size:14.67px;color:#111">Pulling cables D1 Bot charging (ACDP)</div>
<div class="t" style="left:6.60px;top:86.58px;font-size:14.67px;color:#111">Terminations D1 Bot charging (ACDP)</div>
<div class="t" style="left:6.60px;top:141.58px;font-size:14.67px;color:#111">Conduit D2 Bot charging (ACDP)</div>
<div class="t" style="left:6.60px;top:168.58px;font-size:14.67px;color:#111">Pulling cables D2 Bot charging (ACDP)</div>
<div class="t" style="left:6.60px;top:196.58px;font-size:14.67px;color:#111">Terminations D2 Bot charging (ACDP)</div>
<div class="t" style="left:6.60px;top:251.58px;font-size:14.67px;color:#111">Conduit D3 Bot charging (ACDP)</div>
<div class="t" style="left:6.60px;top:278.58px;font-size:14.67px;color:#111">Pulling cables D3 Bot charging (ACDP)</div>
<div class="t" style="left:6.60px;top:306.58px;font-size:14.67px;color:#111">Terminations D3 Bot charging (ACDP)</div>
<div class="t" style="left:6.60px;top:361.58px;font-size:14.67px;color:#111">Conduit D4 Bot charging (ACDP)</div>
<div class="t" style="left:6.60px;top:388.58px;font-size:14.67px;color:#111">Pulling cables D4 Bot charging (ACDP)</div>
<div class="t" style="left:6.60px;top:416.58px;font-size:14.67px;color:#111">Terminations D4 Bot charging (ACDP)</div>
<div class="t" style="left:6.60px;top:471.58px;font-size:14.67px;color:#111">Conduit C1 DRV monitor</div>
<div class="t" style="left:6.60px;top:498.58px;font-size:14.67px;color:#111">Pulling cables C1 DRV monitor</div>
<div class="t" style="left:6.60px;top:526.58px;font-size:14.67px;color:#111">Terminations C1 DRV monitor</div>
<div class="t" style="left:6.60px;top:581.58px;font-size:14.67px;color:#111">Conduit C1 DRV monitor</div>
<div class="t" style="left:6.60px;top:608.58px;font-size:14.67px;color:#111">Pulling cables C1 DRV monitor</div>
<div class="t" style="left:6.60px;top:636.58px;font-size:14.67px;color:#111">Terminations C1 DRV monitor</div>
<div class="t" style="left:6.60px;top:691.58px;font-size:14.67px;color:#111">Conduit A2 (1) Mastless lift drive control</div>
<div class="t" style="left:6.60px;top:718.58px;font-size:14.67px;color:#111">Pulling cables A2 (1) Mastless lift drive control</div>
</div>
<div class="a" style="left:1000px;top:277px;width:337px;height:732px;overflow:hidden">
<div class="t" style="left:6.10px;top:58.58px;font-size:14.67px;color:#111">Pulling cables H Mint. Areas, Laptops,Accessories</div>
<div class="t" style="left:6.10px;top:86.58px;font-size:14.67px;color:#111">Terminations H Mint. Areas, Laptops,Accessories</div>
<div class="t" style="left:6.10px;top:141.58px;font-size:14.67px;color:#111">Conduit R1 Inbound cell (MCP0001)(45KVA)</div>
<div class="t" style="left:6.10px;top:168.58px;font-size:14.67px;color:#111">Pulling cables R1 Inbound cell (MCP0001)(45KVA)</div>
<div class="t" style="left:6.10px;top:196.58px;font-size:14.67px;color:#111">Terminations R1 Inbound cell (MCP0001)(45KVA)</div>
<div class="t" style="left:6.10px;top:251.58px;font-size:14.67px;color:#111">Conduit P Adapter cell newtork PLC (UPS)</div>
<div class="t" style="left:6.10px;top:278.58px;font-size:14.67px;color:#111">Pulling cables P Adapter cell newtork PLC (UPS)</div>
<div class="t" style="left:6.10px;top:306.58px;font-size:14.67px;color:#111">Terminations P Adapter cell newtork PLC (UPS)</div>
<div class="t" style="left:6.10px;top:361.58px;font-size:14.67px;color:#111">Conduit V1 Inbound standard power</div>
<div class="t" style="left:6.10px;top:388.58px;font-size:14.67px;color:#111">Pulling cables V1 Inbound standard power</div>
<div class="t" style="left:6.10px;top:416.58px;font-size:14.67px;color:#111">Terminations V1 Inbound standard power</div>
<div class="t" style="left:6.10px;top:471.58px;font-size:14.67px;color:#111">Conduit V2 Inbound standard power</div>
<div class="t" style="left:6.10px;top:498.58px;font-size:14.67px;color:#111">Pulling cables V2 Inbound standard power</div>
<div class="t" style="left:6.10px;top:526.58px;font-size:14.67px;color:#111">Terminations V2 Inbound standard power</div>
</div>
<div class="a" style="left:1345px;top:277px;width:259px;height:732px;overflow:hidden">
<div class="t" style="left:6.70px;top:141.58px;font-size:14.67px;color:#111">D1 Bot charging (ACDP)</div>
<div class="t" style="left:6.70px;top:251.58px;font-size:14.67px;color:#111">D2 Bot charging (ACDP)</div>
<div class="t" style="left:6.70px;top:361.58px;font-size:14.67px;color:#111">C1 DRV monitor</div>
<div class="t" style="left:6.70px;top:471.58px;font-size:14.67px;color:#111">A2 (1) Mastless lift drive control Drv 1</div>
<div class="t" style="left:6.70px;top:581.58px;font-size:14.67px;color:#111">B1 Product lift controls (UPS) Drv 1</div>
<div class="t" style="left:6.70px;top:691.58px;font-size:14.67px;color:#111">V1 Inbound standard power</div>
</div>
<div class="a" style="left:1612px;top:277px;width:230px;height:732px;overflow:hidden">
<div class="t" style="left:6.00px;top:58.58px;font-size:14.67px;color:#111">Conduit H Mint. Areas, Laptops,Accessories</div>
<div class="t" style="left:6.00px;top:86.58px;font-size:14.67px;color:#111">Pulling cables H Mint. Areas, Laptops,Accessories</div>
<div class="t" style="left:6.00px;top:113.58px;font-size:14.67px;color:#111">Terminations H Mint. Areas, Laptops,Accessories</div>
<div class="t" style="left:6.00px;top:168.58px;font-size:14.67px;color:#111">Conduit D1 Bot charging (ACDP)</div>
<div class="t" style="left:6.00px;top:196.58px;font-size:14.67px;color:#111">Pulling cables D1 Bot charging (ACDP)</div>
<div class="t" style="left:6.00px;top:223.58px;font-size:14.67px;color:#111">Terminations D1 Bot charging (ACDP)</div>
<div class="t" style="left:6.00px;top:278.58px;font-size:14.67px;color:#111">Conduit D2 Bot charging (ACDP)</div>
<div class="t" style="left:6.00px;top:306.58px;font-size:14.67px;color:#111">Pulling cables D2 Bot charging (ACDP)</div>
<div class="t" style="left:6.00px;top:333.58px;font-size:14.67px;color:#111">Terminations D2 Bot charging (ACDP)</div>
<div class="t" style="left:6.00px;top:388.58px;font-size:14.67px;color:#111">Conduit C1 DRV monitor</div>
<div class="t" style="left:6.00px;top:416.58px;font-size:14.67px;color:#111">Pulling cables C1 DRV monitor</div>
<div class="t" style="left:6.00px;top:443.58px;font-size:14.67px;color:#111">Terminations C1 DRV monitor</div>
<div class="t" style="left:6.00px;top:498.58px;font-size:14.67px;color:#111">Conduit A2 (1) Mastless lift drive control Drv 1</div>
<div class="t" style="left:6.00px;top:526.58px;font-size:14.67px;color:#111">Pulling cables A2 (1) Mastless lift drive control Drv 1</div>
<div class="t" style="left:6.00px;top:553.58px;font-size:14.67px;color:#111">Terminations A2 (1) Mastless lift drive control Drv 1</div>
<div class="t" style="left:6.00px;top:608.58px;font-size:14.67px;color:#111">Conduit B1 Product lift controls (UPS) Drv 1</div>
<div class="t" style="left:6.00px;top:636.58px;font-size:14.67px;color:#111">Pulling cables B1 Product lift controls (UPS) Drv 1</div>
<div class="t" style="left:6.00px;top:663.58px;font-size:14.67px;color:#111">Terminations B1 Product lift controls (UPS) Drv 1</div>
<div class="t" style="left:6.00px;top:718.58px;font-size:14.67px;color:#111">Conduit V1 Inbound standard power Drv 1</div>
</div>
<div class="a" style="left:1845px;top:280px;width:9px;height:101px;background:#a3a3a3;border-radius:4.5px"></div>
<svg class="a" style="left:1845px;top:1001px;" width="8.5" height="6" viewBox="0 0 8.5 6"><path d="M0 0H8.5L4.25 6z" fill="#a0a0a0"/></svg>
<div class="a" style="left:762px;top:1016px;width:551px;height:8.7px;background:#a1a1a1;border-radius:4.4px"></div>
<svg class="a" style="left:208.5px;top:1017px;" width="6.5" height="8" viewBox="0 0 6.5 8"><path d="M6.5 0V8L0 4z" fill="#a0a0a0"/></svg>
<svg class="a" style="left:1830px;top:1017px;" width="6" height="8" viewBox="0 0 6 8"><path d="M0 0V8L6 4z" fill="#a0a0a0"/></svg>
<div class="a" style="left:834px;top:277.5px;width:1077.5px;height:53.5px;background:#fff;border:2px solid #4b8ad6;border-radius:2px;box-shadow:0 3px 9px rgba(0,0,0,0.22)"></div>
<div class="t" style="left:838.80px;top:283.58px;font-size:14.67px;color:#111;letter-spacing:-0.014px;">IF(AND(NOT(CONTAINS("Conduit", [MIB Main from tracker]@row)), NOT(CONTAINS("Pulling cables", [MIB Main from tracker]@row)),</div>
<div class="t" style="left:838.80px;top:304.28px;font-size:14.67px;color:#111;">NOT(CONTAINS("Terminations", [MIB Main from tracker]@row))), SUBSTITUTE([MIB Main from tracker]@row, "MIB RH", " "), "")</div>
<svg class="a" style="left:1872px;top:234px;" width="32" height="32" viewBox="0 0 32 32"><g fill="none" stroke="#404040" stroke-width="1.5" stroke-linejoin="round" stroke-linecap="round"><path d="M6 8H24.2C24.8 8 25.2 8.4 25.2 9V22.2C25.2 22.8 24.8 23.2 24.2 23.2H13.3L9.5 26.3L9 23.2H6C5.4 23.2 4.9 22.8 4.9 22.2V9C4.9 8.4 5.4 8 6 8Z"/></g></svg>
<svg class="a" style="left:1872px;top:338px;" width="32" height="32" viewBox="0 0 32 32"><g fill="none" stroke="#404040" stroke-width="1.5" stroke-linejoin="round" stroke-linecap="round"><path d="M10 8H20.5M8.2 11.3H21.7"/><path d="M6 14.5H24.5C25.1 14.5 25.5 14.9 25.5 15.5V23.4C25.5 26 23.5 28.1 20.9 28.1H6C5.4 28.1 4.9 27.7 4.9 27.1V15.5C4.9 14.9 5.4 14.5 6 14.5Z"/><path d="M20.4 28.1V24.4C20.4 23.8 20.8 23.4 21.4 23.4H25.5"/></g></svg>
<svg class="a" style="left:1872px;top:392px;" width="32" height="32" viewBox="0 0 32 32"><g fill="none" stroke="#404040" stroke-width="1.5" stroke-linejoin="round" stroke-linecap="round"><path d="M21.9 26.8H5.3V7.1H24V18.5"/><path d="M21.5 18.6L24 21.8L26.5 18.6z" fill="#404040"/></g></svg>
<svg class="a" style="left:1872px;top:392px;" width="32" height="32" viewBox="0 0 32 32"><path d="M12.6 11.6H15.6C17.3 11.6 18.2 12.5 18.2 13.9 18.2 15.3 17.3 16.2 15.6 16.2H12.6M12.6 16.2H16C17.8 16.2 18.8 17.2 18.8 18.8 18.8 20.4 17.8 21.5 16 21.5H12.6V11.6" fill="none" stroke="#404040" stroke-width="2" stroke-linejoin="round"/></svg>
<svg class="a" style="left:1872px;top:445px;" width="32" height="32" viewBox="0 0 32 32"><g fill="none" stroke="#404040" stroke-width="1.5" stroke-linejoin="round" stroke-linecap="round"><path d="M13.6 7.4A9.3 9.3 0 0 1 22.5 22.2"/><path d="M20.5 19.4L22.2 22.6L24.5 21.7"/><path d="M16.6 25.3A9.3 9.3 0 0 1 8.9 9.6"/><path d="M5.6 9.2L9.5 8.6L10.1 12.3"/><path d="M11.3 16.4L14.4 19.4L18.4 14.6"/></g></svg>
<svg class="a" style="left:1872px;top:498px;" width="32" height="32" viewBox="0 0 32 32"><g fill="none" stroke="#404040" stroke-width="1.5" stroke-linejoin="round" stroke-linecap="round"><path d="M8 5.9H17.8C20.8 5.9 23.3 8.7 23.3 12V25.7C23.3 26.3 22.9 26.7 22.3 26.7H8C7.4 26.7 7 26.3 7 25.7V6.9C7 6.3 7.4 5.9 8 5.9Z"/><path d="M17 5.9V11.1C17 11.7 17.4 12.1 18 12.1H23.3"/><path d="M15.2 22.6V15.4M12 18.5L15.2 15.2L18.3 18.5"/></g></svg>
<svg class="a" style="left:1872px;top:551px;" width="32" height="32" viewBox="0 0 32 32"><g fill="none" stroke="#404040" stroke-width="1.5" stroke-linejoin="round" stroke-linecap="round"><circle cx="15.1" cy="16" r="10.1"/><path d="M7.9 16.2H11.8L14.2 12.6L17.6 20.3L19.5 16.2H22.6"/></g></svg>
<svg class="a" style="left:1872px;top:604px;" width="32" height="32" viewBox="0 0 32 32"><g fill="none" stroke="#404040" stroke-width="1.5" stroke-linejoin="round" stroke-linecap="round"><path d="M8.9 9V7.1C8.9 6.5 9.3 6.1 9.9 6.1H24C24.6 6.1 25 6.5 25 7.1V20.3C25 23.7 22.3 26.5 19 26.5H9.9C9.3 26.5 8.9 26.1 8.9 25.5V23.2"/><path d="M19.1 26.5V21.1C19.1 20.5 19.5 20.1 20.1 20.1H25"/><rect x="5" y="9" width="8.2" height="14" rx="1"/><path d="M8 13H10.2M8 16H10.2M8 19H10.2"/></g></svg>
<svg class="a" style="left:1872px;top:657px;" width="32" height="32" viewBox="0 0 32 32"><g fill="none" stroke="#404040" stroke-width="1.5" stroke-linejoin="round" stroke-linecap="round"><circle cx="10.4" cy="11.8" r="2.9"/><path d="M5 23.6V21.7C5 19.3 7 17.6 9.4 17.6H13"/><rect x="16.1" y="10.4" width="9.1" height="3.8" rx=".6"/><rect x="16.1" y="18.1" width="7.2" height="3.8" rx=".6"/></g></svg>
<svg class="a" style="left:1872px;top:709px;" width="32" height="32" viewBox="0 0 32 32"><g fill="none" stroke="#404040" stroke-width="1.5" stroke-linejoin="round" stroke-linecap="round"><rect x="4.9" y="5.9" width="20.3" height="20.5" rx="1"/><path d="M10.1 16V21.5M13.5 10.3V21.5M16.8 13.6V21.5M20.2 17.2V21.5"/></g></svg>
<svg class="a" style="left:1872px;top:762px;" width="32" height="32" viewBox="0 0 32 32"><g fill="none" stroke="#404040" stroke-width="1.5" stroke-linejoin="round" stroke-linecap="round"><path d="M4.3 27.3L7.6 24M22.8 9.2L26 5.5"/><path d="M9.6 15.7L15.6 21.7L13.5 24C11.5 26 8.5 26.3 6.5 24.3 4.6 22.4 4.8 19.3 6.8 17.4Z"/><path d="M11.4 17.4L13.6 15M14.6 20.5L17.3 17.6"/><path d="M14.3 10.7L20.5 16.9L22.6 15C24.7 12.9 24.8 9.8 22.8 7.8 20.8 5.8 17.7 6 15.6 8.1L14.3 9.8"/></g></svg>
<svg class="a" style="left:1872px;top:815px;" width="32" height="32" viewBox="0 0 32 32"><g fill="#404040"><path d="M12.5 9.5C13.5 15.5 15.5 17.5 21.5 18.5 15.5 19.5 13.5 21.5 12.5 27.5 11.5 21.5 9.5 19.5 3.5 18.5 9.5 17.5 11.5 15.5 12.5 9.5Z"/><path d="M22.5 3C23.1 6.5 24.3 7.9 27.8 8.6 24.3 9.3 23.1 10.7 22.5 14.3 21.9 10.7 20.7 9.3 17.2 8.6 20.7 7.9 21.9 6.5 22.5 3Z"/></g></svg>
<div class="a" style="left:0px;top:1033px;width:1920px;height:47px;background:#1c1c1c"></div>
<div class="a" style="left:0px;top:1028px;width:1920px;height:1px;background:#262626"></div>
<svg class="a" style="left:21px;top:1045px;" width="22" height="22" viewBox="0 0 22 22"><defs><radialGradient id="sun" cx="0.35" cy="0.3" r="0.8"><stop offset="0" stop-color="#f9c53a"/><stop offset="1" stop-color="#f07a12"/></radialGradient></defs><circle cx="10.5" cy="10.5" r="10.3" fill="url(#sun)"/></svg>
<svg class="a" style="left:28px;top:1052px;" width="16" height="10" viewBox="0 0 16 10"><path d="M3.5 9.5H13a3 3 0 0 0 0-6 4.2 4.2 0 0 0-7.8-.5A3 3 0 0 0 3.5 9.5z" fill="#cfe3fb"/></svg>
<div class="a" style="left:30.5px;top:1038px;width:15.5px;height:15.5px;background:#f4929c;border-radius:50%"></div>
<div class="t" style="left:35.00px;top:1040.91px;font-size:10.5px;color:#111;letter-spacing:0.156px;">1</div>
<div class="t" style="left:50.60px;top:1043.03px;font-size:11.3px;color:#fff;letter-spacing:-0.146px;">38°F</div>
<div class="t" style="left:50.60px;top:1058.63px;font-size:11.3px;color:#d6d6d6;letter-spacing:0.422px;">Mostly sunny</div>
<svg class="a" style="left:661px;top:1045px;" width="23" height="23" viewBox="0 0 23 23"><defs><linearGradient id="wg" x1="0" y1="0" x2="1" y2="1"><stop offset="0" stop-color="#6fd0fc"/><stop offset="1" stop-color="#1a92ef"/></linearGradient></defs><rect x="0" y="0" width="11" height="11" rx="1.2" fill="url(#wg)"/><rect x="12" y="0" width="11" height="11" rx="1.2" fill="url(#wg)"/><rect x="0" y="12" width="11" height="11" rx="1.2" fill="url(#wg)"/><rect x="12" y="12" width="11" height="11" rx="1.2" fill="url(#wg)"/></svg>
<div class="a" style="left:697px;top:1040px;width:220px;height:32px;background:#3a3a3a;border:1px solid #454545;border-radius:16px"></div>
<svg class="a" style="left:709px;top:1048px;" width="15" height="16" viewBox="0 0 15 16"><circle cx="6.5" cy="6.5" r="5.4" fill="none" stroke="#e0e0e0" stroke-width="1.5"/><path d="M10.3 10.5L14 14.5" stroke="#e0e0e0" stroke-width="1.6" stroke-linecap="round"/></svg>
<div class="t" style="left:734.00px;top:1049.74px;font-size:13.3px;color:#d2d2d2;letter-spacing:-0.190px;">Search</div>
<svg class="a" style="left:875px;top:1045px;" width="27" height="24" viewBox="0 0 27 24"><rect x="0.5" y="0" width="1.3" height="24" fill="#ccc"/><g transform="skewY(-6)"><rect x="2" y="3" width="24" height="15" fill="#f2f2f2"/><g fill="#d83a3a"><rect x="2" y="3" width="24" height="2"/><rect x="2" y="7" width="24" height="2"/><rect x="2" y="11" width="24" height="2"/><rect x="2" y="15" width="24" height="2"/></g><rect x="2" y="3" width="10" height="8" fill="#3c4a9a"/></g></svg>
<svg class="a" style="left:929px;top:1045px;" width="25" height="23" viewBox="0 0 25 23"><rect x="0" y="7" width="17" height="15" rx="1.5" fill="#6b6b6b"/><rect x="7" y="0" width="17.5" height="15" rx="1.5" fill="#f2f2f2"/><rect x="7" y="7" width="10" height="8" fill="#c8c8c8"/></svg>
<svg class="a" style="left:972px;top:1043px;" width="25" height="25" viewBox="0 0 25 25"><circle cx="8" cy="5" r="3.6" fill="#7b83eb"/><rect x="6" y="10" width="17" height="13" rx="5" fill="#6264d7"/><rect x="1" y="10.5" width="12" height="11.5" rx="1.5" fill="#4b53bc"/><text x="7" y="19.8" text-anchor="middle" font-family="Liberation Sans" font-weight="700" font-size="9" fill="#fff">T</text></svg>
<div class="a" style="left:986px;top:1039px;width:17px;height:17px;background:#c4312b;border-radius:50%"></div>
<div class="t" style="left:991.50px;top:1042.19px;font-size:11px;color:#fff;letter-spacing:-0.125px;">1</div>
<div class="a" style="left:981px;top:1072px;width:7px;height:3px;background:#8a8a8a;border-radius:2px"></div>
<div class="a" style="left:1009px;top:1036px;width:35px;height:40px;background:#2b2b2b;border-radius:5px"></div>
<div class="a" style="left:1044px;top:1037px;width:4px;height:38px;background:#262626;border-radius:0 5px 5px 0"></div>
<svg class="a" style="left:1017px;top:1044px;" width="24" height="24" viewBox="0 0 24 24"><defs><linearGradient id="ed1" x1="0" y1="0" x2="1" y2="1"><stop offset="0" stop-color="#36c3f0"/><stop offset="0.55" stop-color="#2b9be3"/><stop offset="1" stop-color="#52d46b"/></linearGradient></defs><circle cx="12" cy="12" r="11.5" fill="url(#ed1)"/><path d="M4 17C4 11 9 8 13.5 9.5 16.8 10.6 17.5 13.5 15.5 14.5 13 15.8 9.5 13.5 9.5 17.5 9.5 21 13 23.5 17 23 12 24.5 4 22.5 4 17Z" fill="#1a5fb4"/><path d="M23.4 13.5C23 15.6 21 16.6 18.3 16.2 20.2 14.3 19.4 11 16.5 9.7 12.4 7.9 6.8 9.5 4.7 14.8 6.3 6.5 13.8 2.9 19.2 5.6 22.6 7.3 23.8 10.4 23.4 13.5Z" fill="#3fd28a" opacity="0.85"/></svg>
<div class="a" style="left:1021px;top:1072.5px;width:16px;height:3px;background:#4cc2ff;border-radius:2px"></div>
<svg class="a" style="left:1061px;top:1045px;" width="25" height="22" viewBox="0 0 25 22"><path d="M9 2H23L25 6V19C25 20.5 24 21.5 22.5 21.5H11C9.8 21.5 9 20.8 9 19.5Z" fill="#1490df"/><path d="M9 9L25 6V19C25 20.5 24 21.5 22.5 21.5H11L9 20Z" fill="#28a8ea"/><path d="M15 8.5L25 4V10Z" fill="#0a4f95"/><rect x="0" y="4.5" width="13" height="13" rx="1.5" fill="#0f6cbd"/><circle cx="6.5" cy="11" r="3.6" fill="none" stroke="#fff" stroke-width="1.7"/></svg>
<div class="a" style="left:1069px;top:1072px;width:7px;height:3px;background:#8a8a8a;border-radius:2px"></div>
<svg class="a" style="left:1105px;top:1045px;" width="25" height="22" viewBox="0 0 25 22"><path d="M0 2C0 1 .8 0 2 0H8.5L11 2.5H23C24 2.5 25 3.4 25 4.5V20C25 21 24 22 23 22H2C.8 22 0 21 0 20Z" fill="#e9a21c"/><path d="M0 5.5H25V20C25 21 24 22 23 22H2C.8 22 0 21 0 20Z" fill="#fbd04a"/><rect x="4.5" y="15" width="16" height="7" rx="1.5" fill="#1f80d8"/><rect x="7.5" y="17.3" width="10" height="1.8" fill="#8fd0ff"/></svg>
<svg class="a" style="left:1149px;top:1044px;" width="24" height="24" viewBox="0 0 24 24"><circle cx="12" cy="12" r="12" fill="#5865f2"/><path d="M7 8.2C8.3 7.6 9.5 7.3 10.3 7.2L10.7 8C11.6 7.9 12.4 7.9 13.3 8L13.7 7.2C14.5 7.3 15.7 7.6 17 8.2 18.3 10.2 18.9 12.4 18.7 14.8 17.5 15.7 16.3 16.2 15.2 16.5L14.5 15.4C15 15.2 15.5 15 16 14.7 13.4 15.9 10.6 15.9 8 14.7 8.5 15 9 15.2 9.5 15.4L8.8 16.5C7.7 16.2 6.5 15.7 5.3 14.8 5.1 12.4 5.7 10.2 7 8.2Z" fill="#fff"/><circle cx="9.8" cy="12.4" r="1.2" fill="#5865f2"/><circle cx="14.2" cy="12.4" r="1.2" fill="#5865f2"/></svg>
<svg class="a" style="left:1195px;top:1045px;" width="20" height="21" viewBox="0 0 20 21"><rect x="0" y="0" width="20" height="21" rx="4" fill="#3b1a8a"/><path d="M14.5 6.5A5.3 5.3 0 1 0 14.8 13V10.5H10.8" fill="none" stroke="#fff" stroke-width="2.4" stroke-linecap="round"/></svg>
<div class="a" style="left:1202px;top:1072px;width:7px;height:3px;background:#8a8a8a;border-radius:2px"></div>
<svg class="a" style="left:1237px;top:1045px;" width="25" height="22" viewBox="0 0 25 22"><rect x="8" y="0" width="17" height="22" rx="2" fill="#37c6d0"/><circle cx="19.5" cy="5" r="2.5" fill="#0f7a80"/><rect x="15" y="12" width="7" height="7" fill="#1a9ba1"/><rect x="0" y="4" width="13" height="14" rx="1.5" fill="#038387"/><text x="6.5" y="15" text-anchor="middle" font-family="Liberation Sans" font-weight="700" font-size="10" fill="#fff">F</text></svg>
<div class="t" style="left:1832.90px;top:1042.93px;font-size:11.3px;color:#fff;letter-spacing:0.278px;">7:35 AM</div>
<div class="t" style="left:1822.00px;top:1058.93px;font-size:11.3px;color:#fff;letter-spacing:0.470px;">2/16/2026</div>
<svg class="a" style="left:1885px;top:1048px;" width="15" height="17" viewBox="0 0 15 17"><path d="M2 12C2 9 2.5 5.5 6.5 5 6.8 4 7.2 3.6 7.8 3.6S8.8 4 9 5C12.5 5.5 13 9 13 12L14.3 13.6H.7Z" fill="#fff"/><rect x="5.5" y="14.5" width="4.5" height="2" rx="1" fill="#fff"/><text x="11.5" y="6" font-family="Liberation Sans" font-weight="700" font-size="6" fill="#fff">z</text><text x="4.5" y="11.5" font-family="Liberation Sans" font-weight="700" font-size="6" fill="#1c1c1c">z</text></svg>
</body></html>
